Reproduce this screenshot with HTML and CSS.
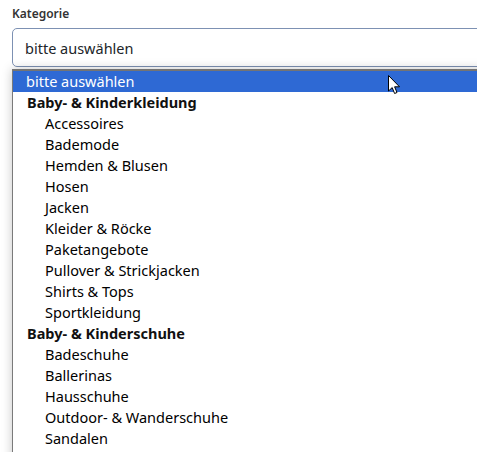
FILE: index.html
```html
<!DOCTYPE html>
<html lang="de">
<head>
<meta charset="utf-8">
<title>Kategorie</title>
<link rel="stylesheet" href="styles.css">
</head>
<body>
<div class="page">
  <div class="field">
    <div class="label">Kategorie</div>
    <div class="select">bitte auswählen</div>
  </div>
  <div class="dropdown">
    <div class="opt selected">bitte auswählen</div>
    <div class="group">Baby- &amp; Kinderkleidung</div>
    <div class="opt sub">Accessoires</div>
    <div class="opt sub">Bademode</div>
    <div class="opt sub">Hemden &amp; Blusen</div>
    <div class="opt sub">Hosen</div>
    <div class="opt sub">Jacken</div>
    <div class="opt sub">Kleider &amp; Röcke</div>
    <div class="opt sub">Paketangebote</div>
    <div class="opt sub">Pullover &amp; Strickjacken</div>
    <div class="opt sub">Shirts &amp; Tops</div>
    <div class="opt sub">Sportkleidung</div>
    <div class="group">Baby- &amp; Kinderschuhe</div>
    <div class="opt sub">Badeschuhe</div>
    <div class="opt sub">Ballerinas</div>
    <div class="opt sub">Hausschuhe</div>
    <div class="opt sub">Outdoor- &amp; Wanderschuhe</div>
    <div class="opt sub">Sandalen</div>
  </div>
  <svg class="cursor" width="13" height="20" viewBox="0 0 13 20">
    <path d="M0.5 0.5 L0.5 16 L4.2 12.6 L6.6 18.5 L9 17.5 L6.6 11.8 L11.5 11.8 Z" fill="#fff" stroke="#000" stroke-width="1" stroke-linejoin="miter"/>
  </svg>
</div>
</body>
</html>
```
FILE: styles.css
```css
html, body {
  margin: 0;
  padding: 0;
  background: #fff;
}
.page {
  position: relative;
  width: 477px;
  height: 452px;
  overflow: hidden;
  font-family: "Noto Sans", "Open Sans", sans-serif;
}
.field {
  padding: 6px 0 0 12px;
}
.label {
  font-size: 12px;
  font-weight: 600;
  color: #333;
  line-height: 16px;
  margin-bottom: 6px;
}
.select {
  width: 520px;
  height: 39px;
  border: 1px solid #7d91b3;
  border-radius: 5px;
  box-sizing: border-box;
  padding: 0 12px;
  font-size: 14.5px;
  line-height: 39px;
  color: #212529;
  background: #fff;
}
.dropdown {
  position: absolute;
  left: 12px;
  top: 69px;
  width: 520px;
  height: 400px;
  border-top: 2px solid #747474;
  border-left: 1px solid #7a7a7a;
  background: #fff;
  box-shadow: 0 0 10px rgba(0, 0, 0, 0.22);
}
.opt, .group {
  height: 21px;
  line-height: 21px;
  font-size: 14.5px;
  color: #000;
  white-space: nowrap;
  padding-left: 13px;
}
.group {
  font-weight: 700;
  padding-left: 14px;
  color: #111;
}
.sub {
  padding-left: 32px;
}
.selected {
  background: #2e69d4;
  color: #fff;
}
.cursor {
  position: absolute;
  left: 388px;
  top: 75px;
}
```
